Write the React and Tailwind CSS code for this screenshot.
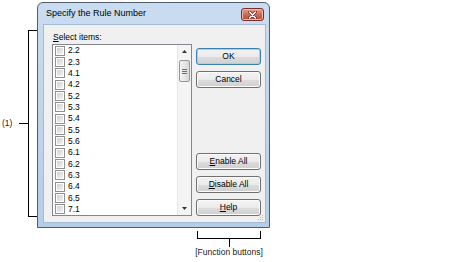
import React from 'react';

const items = ['2.2', '2.3', '4.1', '4.2', '5.2', '5.3', '5.4', '5.5', '5.6', '6.1', '6.2', '6.3', '6.4', '6.5', '7.1'];

const Checkbox = () => (
  <div className="w-[10px] h-[10px] border border-[#8f8f8f] bg-white p-px">
    <div className="w-full h-full bg-gradient-to-br from-[#cfcfcf] to-[#f4f4f4]" />
  </div>
);

const WinButton = ({ children, primary }) => (
  <button
    className={`h-[17px] w-full rounded-[3px] border text-[8.5px] leading-none text-black flex items-center justify-center bg-[linear-gradient(#f2f2f2_0%,#ebebeb_50%,#dddddd_51%,#cfcfcf_100%)] ${
      primary ? 'border-[#3c7fb1] shadow-[inset_0_0_0_1px_#9fd3f5]' : 'border-[#707070] shadow-[inset_0_0_0_1px_#fcfcfc]'
    }`}
  >
    {children}
  </button>
);

const ScrollArrow = ({ down }) => (
  <div className="h-[13px] flex items-center justify-center">
    <svg width="5" height="3" viewBox="0 0 5 3">
      <path d={down ? 'M0 0 H5 L2.5 3 Z' : 'M0 3 H5 L2.5 0 Z'} fill="#333" />
    </svg>
  </div>
);

export default function App() {
  return (
    <div className="w-[474px] h-[262px] bg-white overflow-hidden font-['Liberation_Sans',Arial,sans-serif] text-black">
      <div className="flex pt-[2px]">
        {/* (1) annotation */}
        <div className="w-[37px]">
          <div className="mt-[28px] h-[187px] flex items-center">
            <span className="w-[19px] pl-[2px] text-[8.5px] leading-none text-[#1a1a1a]">(1)</span>
            <div className="w-[9px] h-px bg-black" />
            <div className="w-[9px] h-full border border-r-0 border-black" />
          </div>
        </div>

        {/* Dialog */}
        <div className="w-[233px] h-[226px] border border-[#4d5d6e] rounded-t-[6px] bg-gradient-to-b from-[#cadcf0] to-[#b6cde8] flex flex-col">
          <div className="h-[22px] flex items-start justify-between">
            <span className="pl-[8px] pt-[6px] text-[9px] leading-none">Specify the Rule Number</span>
            <div className="mt-[5px] mr-[5px] w-[23px] h-[13px] rounded-[3px] border border-[#7a2d24] bg-gradient-to-b from-[#e3a091] via-[#cd6c5b] to-[#bb4632] flex items-center justify-center shadow-[inset_0_0_0_1px_#eeb9ab]">
              <svg width="9" height="8" viewBox="0 0 9 8">
                <path d="M1.5 1 L7.5 7 M7.5 1 L1.5 7" stroke="#5a2a24" strokeWidth="3" strokeLinecap="round" />
                <path d="M1.5 1 L7.5 7 M7.5 1 L1.5 7" stroke="#ffffff" strokeWidth="1.6" strokeLinecap="round" />
              </svg>
            </div>
          </div>

          <div className="relative ml-[6px] w-[221px] h-[197px] bg-[#f0f0f0] shadow-[0_0_0_1px_#a5bad3] flex pl-[8px] pt-[8px]">
            <div className="w-[140px] flex flex-col">
              <div className="h-[11px] pl-px text-[8.5px] leading-none">
                <span className="underline">S</span>elect items:
              </div>
              <div className="h-[172px] border border-[#828790] bg-white flex">
                <div className="flex-1 pl-[2px] flex flex-col">
                  {items.map((it) => (
                    <div key={it} className="h-[11.33px] flex items-center gap-[3px]">
                      <Checkbox />
                      <span className="text-[8.5px] leading-none">{it}</span>
                    </div>
                  ))}
                </div>
                <div className="w-[14px] bg-[#f4f4f4] border-l border-[#e6e6e6] flex flex-col">
                  <ScrollArrow />
                  <div className="flex-1 pt-[2px] px-[1px]">
                    <div className="h-[22px] rounded-[2px] border border-[#979797] bg-gradient-to-r from-[#f3f3f3] to-[#d9d9d9] flex flex-col items-center justify-center gap-px">
                      <div className="w-[5px] h-px bg-[#6e6e6e]" />
                      <div className="w-[5px] h-px bg-[#6e6e6e]" />
                      <div className="w-[5px] h-px bg-[#6e6e6e]" />
                    </div>
                  </div>
                  <ScrollArrow down />
                </div>
              </div>
            </div>

            <div className="ml-[4px] w-[65px] flex flex-col pt-[15px] pb-[6px]">
              <WinButton primary>OK</WinButton>
              <div className="mt-[6px]">
                <WinButton>Cancel</WinButton>
              </div>
              <div className="flex-1" />
              <WinButton>
                <span className="underline">E</span>nable All
              </WinButton>
              <div className="mt-[6px]">
                <WinButton>
                  <span className="underline">D</span>isable All
                </WinButton>
              </div>
              <div className="mt-[6px]">
                <WinButton>
                  <span className="underline">H</span>elp
                </WinButton>
              </div>
            </div>

            {/* size grip */}
            <svg className="absolute right-[1px] bottom-[1px]" width="6" height="6" viewBox="0 0 6 6">
              <rect x="4" y="0" width="1" height="1" fill="#b8b8b8" />
              <rect x="2" y="2" width="1" height="1" fill="#b8b8b8" />
              <rect x="4" y="2" width="1" height="1" fill="#b8b8b8" />
              <rect x="0" y="4" width="1" height="1" fill="#b8b8b8" />
              <rect x="2" y="4" width="1" height="1" fill="#b8b8b8" />
              <rect x="4" y="4" width="1" height="1" fill="#b8b8b8" />
            </svg>
          </div>
        </div>
      </div>

      {/* Function buttons annotation */}
      <div className="ml-[197px] w-[64px] flex flex-col items-center">
        <div className="mt-[3px] w-full h-[8px] border border-t-0 border-black" />
        <div className="w-px h-[8px] bg-black" />
        <span className="whitespace-nowrap text-[8.5px] leading-none pt-[1px] text-[#1a1a1a]">[Function buttons]</span>
      </div>
    </div>
  );
}
